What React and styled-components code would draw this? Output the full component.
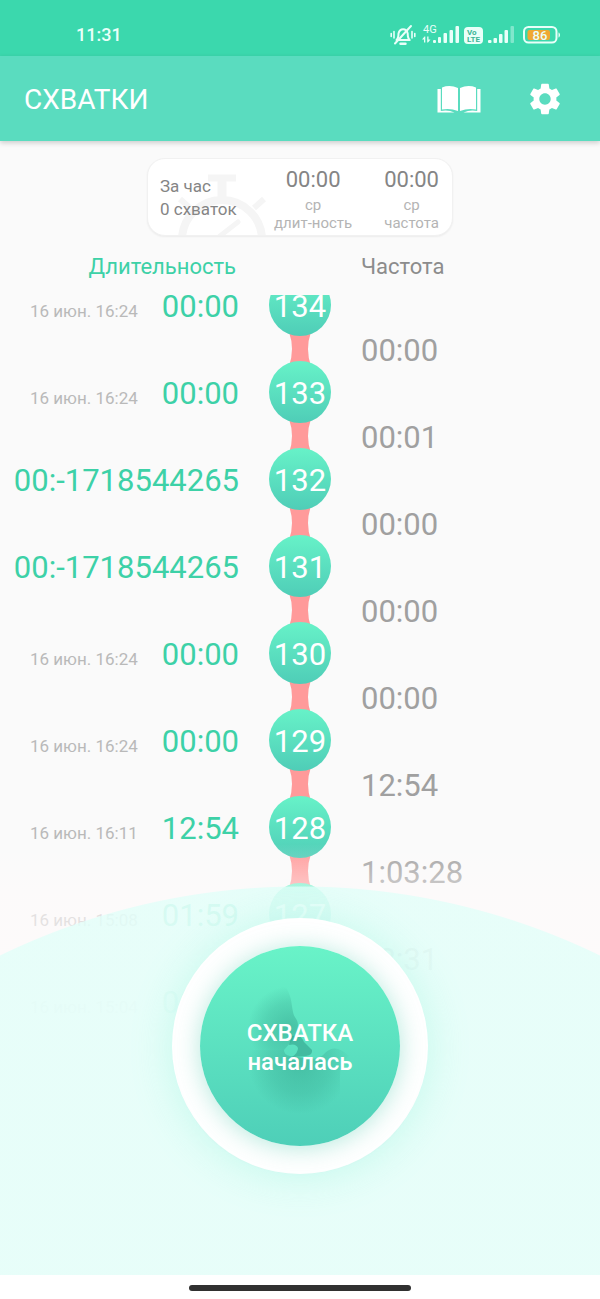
import React from 'react';
import styled, { createGlobalStyle } from 'styled-components';

const GlobalStyle = createGlobalStyle`
  * {
    box-sizing: border-box;
  }
  body {
    margin: 0;
    background: #fafafa;
    font-family: Roboto, 'Noto Sans', sans-serif;
  }
`;

const Screen = styled.div`
  display: flex;
  flex-direction: column;
  min-height: 100vh;
`;

const StatusBar = styled.div`
  display: flex;
  align-items: center;
  justify-content: space-between;
  height: 56px;
  padding: 14px 39px 0 76px;
  background: #3bd8ad;
  color: #e9fff9;
`;

const Clock = styled.span`
  font-size: 18px;
  line-height: 24px;
  font-weight: 500;
`;

const StatusIcons = styled.div`
  display: flex;
  align-items: center;
  gap: 5px;
`;

const AppBar = styled.header`
  display: flex;
  align-items: center;
  justify-content: space-between;
  height: 85px;
  padding: 0 36px 0 24px;
  background: #5adcbf;
  color: #fff;
  box-shadow: 0 2px 5px rgba(0, 0, 0, 0.18);
`;

const Title = styled.h1`
  margin: 0;
  padding-top: 2px;
  font-size: 28px;
  line-height: 36px;
  font-weight: 400;
`;

const Actions = styled.div`
  display: flex;
  align-items: center;
  gap: 45px;
`;

const IconButton = styled.button`
  display: flex;
  padding: 0;
  border: none;
  background: none;
  color: inherit;
  cursor: pointer;
`;

const Summary = styled.section`
  position: relative;
  display: flex;
  align-items: center;
  gap: 32px;
  width: 306px;
  margin: 17px auto 0;
  padding: 7px 13px 3px 12px;
  border: 1px solid #f1f1f1;
  border-radius: 18px;
  background: #fff;
  box-shadow: 0 1px 2px rgba(0, 0, 0, 0.06);
  overflow: hidden;
`;

const StopwatchArt = styled.svg`
  position: absolute;
  left: 26px;
  bottom: 0;
`;

const HourTotals = styled.div`
  position: relative;
  flex: 1;
  padding-bottom: 2px;
  color: #858585;
  font-size: 17px;
  line-height: 23px;
  white-space: nowrap;
`;

const Average = styled.div`
  position: relative;
  color: #b4b4b4;
  font-size: 15px;
  line-height: 18px;
  text-align: center;
`;

const AverageValue = styled.div`
  margin-bottom: 3px;
  color: #858585;
  font-size: 22px;
  line-height: 27px;
`;

const Columns = styled.div`
  display: grid;
  grid-template-columns: 1fr 62px 1fr;
  column-gap: 30px;
`;

const Headings = styled(Columns)`
  padding: 19px 0 16px;
`;

const Heading = styled.h2`
  grid-column: ${(props) => (props.$main ? 1 : 3)};
  margin: 0;
  padding-right: ${(props) => (props.$main ? '3px' : 0)};
  color: ${(props) => (props.$main ? '#3dd1a7' : '#8c8c8c')};
  font-size: 22px;
  line-height: 24px;
  font-weight: 400;
  text-align: ${(props) => (props.$main ? 'right' : 'left')};
`;

const Stage = styled.main`
  position: relative;
  flex: 1;
  overflow: hidden;
`;

const Timeline = styled.ol`
  margin: -21px 0 0;
  padding: 0;
  list-style: none;
`;

const Row = styled(Columns).attrs({ as: 'li' })`
  height: 87px;
`;

const Duration = styled.div`
  display: flex;
  align-items: baseline;
  justify-content: flex-end;
  gap: 24px;
  padding-top: 15px;
  white-space: nowrap;
`;

const DateLabel = styled.span`
  color: #b9b9b9;
  font-size: 17px;
`;

const DurationValue = styled.span`
  color: #3dd1a7;
  font-size: 31px;
  line-height: 36px;
`;

const Interval = styled.div`
  align-self: end;
  color: #a0a0a0;
  font-size: 31px;
  line-height: 22px;
`;

const Spine = styled.div`
  display: flex;
  flex-direction: column;
  align-items: center;
`;

const Bead = styled.span`
  z-index: 1;
  flex: none;
  width: 62px;
  height: 62px;
  border-radius: 50%;
  background: linear-gradient(#67f2c8, #4fcdb7);
  color: #fff;
  font-size: 31px;
  line-height: 65px;
  text-align: center;
`;

const Link = styled.svg`
  flex: none;
  margin: -4px 0;
`;

const Dock = styled.div`
  position: absolute;
  right: 0;
  bottom: 0;
  left: 0;
  z-index: 2;
  display: flex;
  justify-content: center;
  padding: 82px 0 101px;
  background: radial-gradient(circle at 50% 737px, rgba(225, 255, 249, 0.78) 686px, transparent 687px),
    linear-gradient(rgba(254, 250, 250, 0) 8px, rgba(254, 250, 250, 0.55) 60px, rgba(254, 250, 250, 0.88) 180px, rgb(254, 250, 250) 240px);
`;

const Ring = styled.div`
  padding: 28px;
  border-radius: 50%;
  background: #fff;
  box-shadow: 0 2px 40px rgba(120, 240, 212, 0.32);
`;

const StartButton = styled.button`
  position: relative;
  display: flex;
  flex-direction: column;
  align-items: center;
  justify-content: center;
  width: 200px;
  height: 200px;
  padding: 4px 0 0;
  border: none;
  border-radius: 50%;
  background: linear-gradient(#69f3c8, #4ecfb8);
  box-shadow: 0 2px 24px rgba(70, 200, 170, 0.4);
  color: #fff;
  font-family: inherit;
  font-size: 24px;
  line-height: 29px;
  font-weight: 500;
  cursor: pointer;
`;

const BabyArt = styled.svg`
  position: absolute;
  top: 0;
  left: 0;
`;

const ButtonLine = styled.span`
  position: relative;
`;

const HomeBar = styled.div`
  display: flex;
  justify-content: center;
  height: 24px;
  padding-top: 10px;
  background: #fff;
`;

const HomeHandle = styled.div`
  width: 37%;
  height: 6px;
  border-radius: 3px;
  background: #303030;
`;

const contractions = [
  { number: 134, date: '16 июн. 16:24', duration: '00:00', interval: '00:00' },
  { number: 133, date: '16 июн. 16:24', duration: '00:00', interval: '00:01' },
  { number: 132, duration: '00:-1718544265', interval: '00:00' },
  { number: 131, duration: '00:-1718544265', interval: '00:00' },
  { number: 130, date: '16 июн. 16:24', duration: '00:00', interval: '00:00' },
  { number: 129, date: '16 июн. 16:24', duration: '00:00', interval: '12:54' },
  { number: 128, date: '16 июн. 16:11', duration: '12:54', interval: '1:03:28' },
  { number: 127, date: '16 июн. 15:08', duration: '01:59', interval: '08:31' },
  { number: 126, date: '16 июн. 15:04', duration: '00:53' },
];

const MutedBell = () => (
  <svg width="26" height="24" viewBox="0 0 26 24" fill="none" stroke="currentColor" strokeLinecap="round">
    <path d="M6.500 17c1.800-1.500 2-3 2-6.500a4.800 6 0 0 1 9.200 0c0 3.500.2 5 2 6.500z" strokeWidth="2" strokeLinejoin="round" />
    <path d="M5 20.500L21 3" strokeWidth="2" />
    <path d="M10.500 20.800h5" strokeWidth="2.400" />
    <path d="M4 8.500v6.500M1.200 10.500v3M22 8.500v6.500M24.800 10.500v3" strokeWidth="1.600" />
  </svg>
);

const MobileSignal = () => (
  <svg width="38" height="24" viewBox="0 0 38 24" fill="currentColor">
    <text x="2" y="10" fontSize="11" fontFamily="Roboto, sans-serif">4G</text>
    <path d="M3.500 13.500L1 16.500h2v3h1.300v-6zM7 19.500l2.500-3h-2v-3H6.200v6z" />
    <rect x="12" y="17" width="3" height="3" rx="1" />
    <rect x="17" y="14" width="3" height="6" rx="1" />
    <rect x="22.500" y="10" width="3.500" height="10" rx="1" />
    <rect x="28.500" y="7" width="3.500" height="13" rx="1" />
    <rect x="34.500" y="3" width="3.500" height="17" rx="1" />
  </svg>
);

const VoLte = () => (
  <svg width="19" height="17" viewBox="0 0 19 17">
    <rect width="19" height="17" rx="4" fill="currentColor" />
    <text x="3" y="8" fontSize="8" fontWeight="700" fontFamily="Roboto, sans-serif" fill="#3bb595">Vo</text>
    <text x="3" y="15" fontSize="8" fontWeight="700" fontFamily="Roboto, sans-serif" fill="#3bb595">LTE</text>
  </svg>
);

const SecondSignal = () => (
  <svg width="30" height="18" viewBox="0 0 30 18" fill="currentColor">
    <rect x="0" y="14" width="3.500" height="3" rx="1" />
    <rect x="5.500" y="12" width="3.500" height="5" rx="1" />
    <rect x="11" y="8" width="3.500" height="9" rx="1" />
    <rect x="16.500" y="4" width="3.500" height="13" rx="1" />
    <rect x="22.500" y="0" width="3.500" height="17" rx="1" opacity="0.400" />
  </svg>
);

const Battery = () => (
  <svg width="38" height="18" viewBox="0 0 38 18">
    <rect x="1" y="1" width="32.500" height="15.500" rx="4.500" fill="none" stroke="currentColor" strokeWidth="2" />
    <rect x="4.500" y="4" width="22.500" height="10" rx="2" fill="#efa832" />
    <path d="M35.500 6.500c2 .5 2 4.500 0 5z" fill="currentColor" />
    <text x="17" y="13.500" fontSize="13" fontWeight="500" fontFamily="Roboto, sans-serif" fill="currentColor" textAnchor="middle">86</text>
  </svg>
);

const BookIcon = () => (
  <svg width="44" height="28" viewBox="0 0 44 28" fill="currentColor">
    <path d="M5 2.500Q13-.5 21 3v23Q13 22.800 5 24.500z" />
    <path d="M39 2.500Q31-.5 23 3v23Q31 22.800 39 24.500z" />
    <path d="M.5 4H3.800v22Q11 24.500 17.500 27.500H.5zM43.500 4H40.200v22Q33 24.500 26.500 27.500h17z" />
  </svg>
);

const GearIcon = () => (
  <svg width="38" height="38" viewBox="0 0 24 24" fill="currentColor">
    <path d="M19.140 12.940c.04-.3.06-.61.06-.94 0-.32-.02-.64-.07-.94l2.030-1.580c.18-.14.23-.41.12-.61l-1.920-3.320c-.12-.22-.37-.29-.59-.22l-2.390.96c-.5-.38-1.030-.7-1.620-.94l-.36-2.540c-.04-.24-.24-.41-.48-.41h-3.840c-.24 0-.43.17-.47.41l-.36 2.540c-.59.24-1.130.57-1.620.94l-2.390-.96c-.22-.08-.47 0-.59.22L2.740 8.870c-.12.21-.08.47.12.61l2.030 1.580c-.05.3-.09.63-.09.94s.02.64.07.94l-2.030 1.580c-.18.14-.23.41-.12.61l1.920 3.320c.12.22.37.29.59.22l2.390-.96c.5.38 1.030.7 1.620.94l.36 2.540c.05.24.24.41.48.41h3.840c.24 0 .44-.17.47-.41l.36-2.540c.59-.24 1.130-.56 1.620-.94l2.390.96c.22.08.47 0 .59-.22l1.920-3.320c.12-.22.07-.47-.12-.61l-2.010-1.580zM12 15.600c-1.980 0-3.600-1.620-3.600-3.600s1.620-3.600 3.600-3.600 3.600 1.620 3.600 3.600-1.620 3.600-3.600 3.600z" />
  </svg>
);

const Stopwatch = () => (
  <StopwatchArt width="96" height="61" viewBox="0 0 96 61" fill="none" stroke="#f5f5f5" aria-hidden="true">
    <circle cx="48" cy="66" r="40" strokeWidth="8" />
    <path d="M34 4h28" strokeWidth="7" />
    <path d="M48 6v18" strokeWidth="9" />
    <path d="M6 25l10 9M90 25l-10 9" strokeWidth="6" />
    <path d="M46 62l18-14" strokeWidth="5" strokeLinecap="round" />
  </StopwatchArt>
);

const Baby = () => (
  <BabyArt width="200" height="200" viewBox="0 0 200 200" aria-hidden="true">
    <defs>
      <radialGradient id="head" gradientUnits="userSpaceOnUse" cx="90" cy="82" r="42">
        <stop offset="0" stopColor="#2f9c86" stopOpacity="0.480" />
        <stop offset="0.600" stopColor="#2f9c86" stopOpacity="0.240" />
        <stop offset="1" stopColor="#2f9c86" stopOpacity="0" />
      </radialGradient>
      <radialGradient id="body" gradientUnits="userSpaceOnUse" cx="100" cy="116" r="52">
        <stop offset="0" stopColor="#2f9c86" stopOpacity="0.460" />
        <stop offset="0.600" stopColor="#2f9c86" stopOpacity="0.240" />
        <stop offset="1" stopColor="#2f9c86" stopOpacity="0" />
      </radialGradient>
    </defs>
    <path d="M82 36C92 48 91 56 93 66C94 72 98 73 98 79C98 86 94 90 91 96L84 104H44V36z" fill="url(#head)" />
    <path d="M44 104H84Q84 109 90 110L104 112C112 114 120 113 125 107C132 100 140 101 149 110Q140 116 140 130V170H44z" fill="url(#body)" />
    <path d="M92 90Q101 88 104 96L112 104Q113 109 106 110L92 111Q98 107 98 102Q96 97 89 99z" fill="#2f9c86" opacity="0.550" />
  </BabyArt>
);

const App = () => {
  return (
    <Screen>
      <GlobalStyle />
      <StatusBar>
        <Clock>11:31</Clock>
        <StatusIcons>
          <MutedBell />
          <MobileSignal />
          <VoLte />
          <SecondSignal />
          <Battery />
        </StatusIcons>
      </StatusBar>
      <AppBar>
        <Title>СХВАТКИ</Title>
        <Actions>
          <IconButton type="button" aria-label="Справка">
            <BookIcon />
          </IconButton>
          <IconButton type="button" aria-label="Настройки">
            <GearIcon />
          </IconButton>
        </Actions>
      </AppBar>
      <Summary>
        <Stopwatch />
        <HourTotals>
          За час
          <br />
          0 схваток
        </HourTotals>
        <Average>
          <AverageValue>00:00</AverageValue>
          ср
          <br />
          длит-ность
        </Average>
        <Average>
          <AverageValue>00:00</AverageValue>
          ср
          <br />
          частота
        </Average>
      </Summary>
      <Headings>
        <Heading $main>Длительность</Heading>
        <Heading>Частота</Heading>
      </Headings>
      <Stage>
        <Timeline>
          {contractions.map((item) => (
            <Row key={item.number}>
              <Duration>
                {item.date && <DateLabel>{item.date}</DateLabel>}
                <DurationValue>{item.duration}</DurationValue>
              </Duration>
              <Spine>
                <Bead>{item.number}</Bead>
                {item.interval && (
                  <Link width="22" height="34" viewBox="0 0 22 34" aria-hidden="true">
                    <path d="M0 0Q6 17 0 34H22Q16 17 22 0z" fill="#ff9a9a" />
                  </Link>
                )}
              </Spine>
              {item.interval && <Interval>{item.interval}</Interval>}
            </Row>
          ))}
        </Timeline>
        <Dock>
          <Ring>
            <StartButton type="button">
              <Baby />
              <ButtonLine>СХВАТКА</ButtonLine>
              <ButtonLine>началась</ButtonLine>
            </StartButton>
          </Ring>
        </Dock>
      </Stage>
      <HomeBar>
        <HomeHandle />
      </HomeBar>
    </Screen>
  );
};

export default App;
